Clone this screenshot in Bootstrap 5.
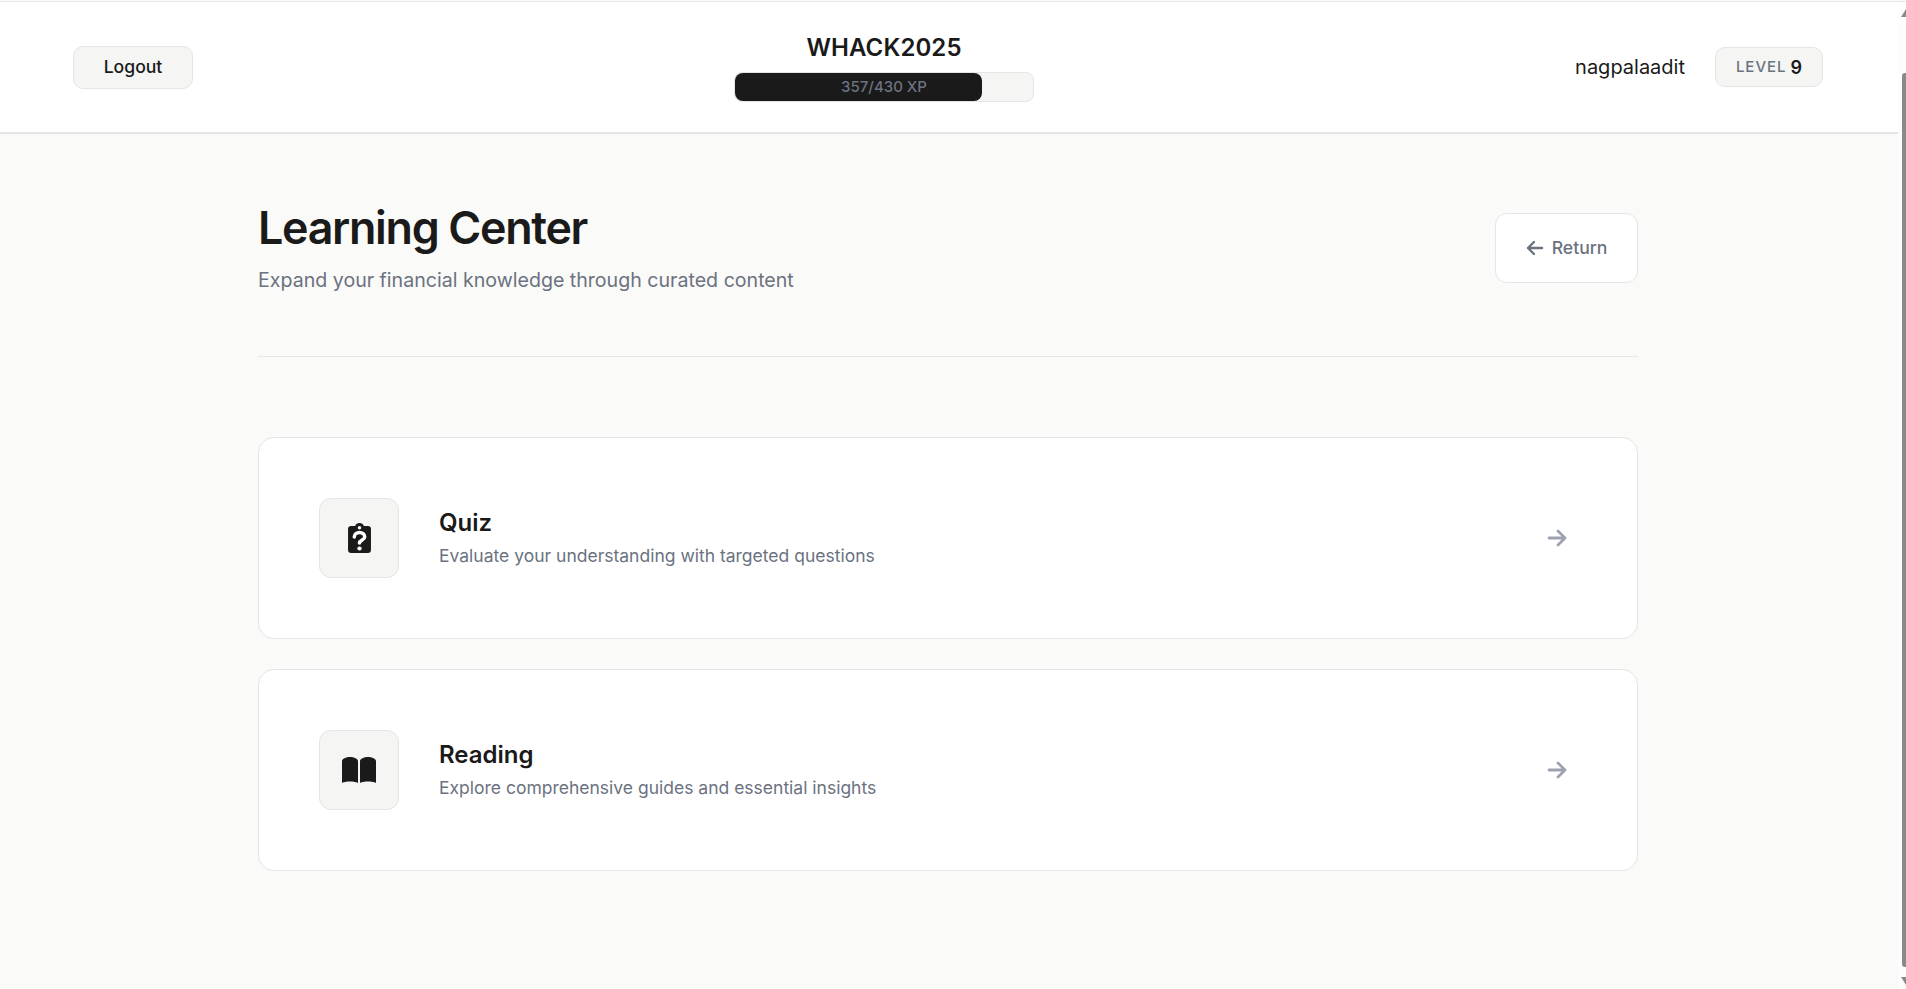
<!DOCTYPE html>
<html lang="en">

<head>
    <meta charset="UTF-8">
    <title>Learning Center</title>
    <meta name="viewport" content="width=device-width, initial-scale=1">
    <link href="https://cdn.jsdelivr.net/npm/bootstrap@5.3.2/dist/css/bootstrap.min.css" rel="stylesheet">
    <style>
        html, body { height: 100%; overflow: hidden; }
        body { font-family: Inter, "Liberation Sans", sans-serif; background: #fafaf8; color: #1a1a1a; padding-top: 1px; }

        .page-shell { height: 988px; border-top: 1px solid #e5e5e5; }
        .page-main { width: 1898px; flex: none; }

        .top-bar { height: 132px; padding: 0 75px 0 73px; background: #fff; border-bottom: 2px solid #e5e5e5; }
        .logout-btn { width: 120px; height: 43px; padding: 0; font-size: 17.6px; font-weight: 500; color: #1a1a1a; background: #f5f5f4; border: 1px solid #e5e5e5; border-radius: 10px; }
        .hack-title { font-size: 24px; font-weight: 600; line-height: 29px; letter-spacing: .1px; margin-bottom: 10px; }
        .xp-track { width: 300px; height: 30px; background: #f5f5f4; border: 1px solid #e5e5e5; border-radius: 8px; }
        .xp-fill { height: 100%; background: #1a1a1a; border-radius: 8px; }
        .xp-text { top: 0; left: 0; font-size: 15px; font-weight: 500; line-height: 28px; color: #6b7280; }
        .user-name { font-size: 20px; font-weight: 400; }
        .level-chip { width: 108px; height: 40px; background: #f5f5f4; border: 1px solid #e5e5e5; border-radius: 10px; font-size: 18px; font-weight: 600; }
        .level-word { font-size: 15px; font-weight: 500; color: #6b7280; letter-spacing: 1px; }
        .user-block { gap: 30px; }

        .content-wrap { width: 1380px; margin-left: 258px; padding-top: 67px; }
        .head-row { padding-bottom: 61px; border-bottom: 1px solid #e5e5e5; margin-bottom: 80px; }
        .page-title { font-size: 44.8px; font-weight: 600; line-height: 54px; letter-spacing: -1.3px; margin: 0 0 10px; }
        .page-sub { font-size: 19.6px; line-height: 30px; color: #6b7280; margin: 0; }
        .return-btn { width: 143px; height: 70px; padding: 0; font-size: 17.6px; font-weight: 500; color: #6b7280; background: #fff; border: 1px solid #e5e5e5; border-radius: 12px; }

        .topic-card { height: 202px; padding: 0 70px 0 60px; background: #fff; border: 1px solid #e5e5e5; border-radius: 16px; margin-bottom: 30px; }
        .topic-icon { width: 80px; height: 80px; background: #f5f5f4; border: 1px solid #e5e5e5; border-radius: 12px; margin-right: 40px; }
        .topic-name { font-size: 24px; font-weight: 600; line-height: 32px; margin: 0 0 4px; }
        .topic-text { font-size: 17.5px; line-height: 26px; color: #6b7280; margin: 0; }

        .fake-scroll { width: 8px; padding-left: 4px; padding-top: 7px; background: #fdfdfd; overflow: hidden; }
        .scroll-up { width: 0; height: 0; margin-left: -1px; border-left: 5px solid transparent; border-right: 5px solid transparent; border-bottom: 8px solid #8a8a8a; }
        .scroll-down { width: 0; height: 0; margin-left: -1px; border-left: 5px solid transparent; border-right: 5px solid transparent; border-top: 8px solid #8a8a8a; }
        .scroll-thumb { width: 4px; height: 894px; margin: 56px 0 10px; background: #8a8a8a; border-radius: 3px 0 0 3px; }
    </style>
</head>

<body>
    <div class="page-shell d-flex">
        <div class="page-main">
            <header class="top-bar d-flex align-items-center justify-content-between">
                <button class="btn logout-btn" type="button">Logout</button>
                <div class="text-center">
                    <div class="hack-title">WHACK2025</div>
                    <div class="xp-track position-relative">
                        <div class="xp-fill" style="width: 83%"></div>
                        <div class="xp-text position-absolute w-100">357/430 XP</div>
                    </div>
                </div>
                <div class="user-block d-flex align-items-center">
                    <span class="user-name">nagpalaadit</span>
                    <div class="level-chip d-flex align-items-center justify-content-center gap-1">
                        <span class="level-word">LEVEL</span> 9
                    </div>
                </div>
            </header>

            <main class="content-wrap">
                <div class="head-row d-flex justify-content-between align-items-center">
                    <div>
                        <h1 class="page-title">Learning Center</h1>
                        <p class="page-sub">Expand your financial knowledge through curated content</p>
                    </div>
                    <button class="btn return-btn d-flex align-items-center justify-content-center gap-2" type="button">
                        <svg width="18" height="18" viewBox="0 0 18 18" fill="none" stroke="currentColor" stroke-width="2.400" stroke-linecap="round" stroke-linejoin="round"><path d="M16 9H2M8 3 2 9l6 6"/></svg>
                        Return
                    </button>
                </div>

                <div class="topic-card d-flex align-items-center">
                    <div class="topic-icon d-flex align-items-center justify-content-center">
                        <svg width="25" height="32" viewBox="0 0 24 32" preserveAspectRatio="none">
                            <path fill="#1a1a1a" fill-rule="evenodd" d="M12 1a4.500 4.500 0 0 1 4.200 3H20a3 3 0 0 1 3 3v21a3 3 0 0 1-3 3H4a3 3 0 0 1-3-3V7a3 3 0 0 1 3-3h3.800A4.500 4.500 0 0 1 12 1Zm0 3a1.700 1.700 0 1 0 0 3.400A1.700 1.700 0 0 0 12 4Z"/>
                            <path fill="none" stroke="#fff" stroke-width="3.400" stroke-linecap="round" d="M7 15c0-6 10-6 10 0 0 3-5 3-5 6"/>
                            <circle cx="12" cy="26.500" r="2.100" fill="#fff"/>
                        </svg>
                    </div>
                    <div class="flex-grow-1">
                        <h3 class="topic-name">Quiz</h3>
                        <p class="topic-text">Evaluate your understanding with targeted questions</p>
                    </div>
                    <svg width="20" height="18" viewBox="0 0 20 18" fill="none" stroke="#9ca3af" stroke-width="2.800" stroke-linecap="round" stroke-linejoin="round"><path d="M2 9h16M11 2l7 7-7 7"/></svg>
                </div>

                <div class="topic-card d-flex align-items-center">
                    <div class="topic-icon d-flex align-items-center justify-content-center">
                        <svg width="34" height="26" viewBox="0 0 34 26" fill="#1a1a1a">
                            <path d="M0 4C0 2 4 0 8 0s8 2 8 4v22c-3-2-13-2-16 0Z"/>
                            <path d="M18 4c0-2 4-4 8-4s8 2 8 4v22c-3-2-13-2-16 0Z"/>
                        </svg>
                    </div>
                    <div class="flex-grow-1">
                        <h3 class="topic-name">Reading</h3>
                        <p class="topic-text">Explore comprehensive guides and essential insights</p>
                    </div>
                    <svg width="20" height="18" viewBox="0 0 20 18" fill="none" stroke="#9ca3af" stroke-width="2.800" stroke-linecap="round" stroke-linejoin="round"><path d="M2 9h16M11 2l7 7-7 7"/></svg>
                </div>
            </main>
        </div>
        <div class="fake-scroll flex-shrink-0" aria-hidden="true">
            <div class="scroll-up"></div>
            <div class="scroll-thumb"></div>
            <div class="scroll-down"></div>
        </div>
    </div>

    <script src="https://cdn.jsdelivr.net/npm/bootstrap@5.3.2/dist/js/bootstrap.bundle.min.js"></script>
</body>

</html>
